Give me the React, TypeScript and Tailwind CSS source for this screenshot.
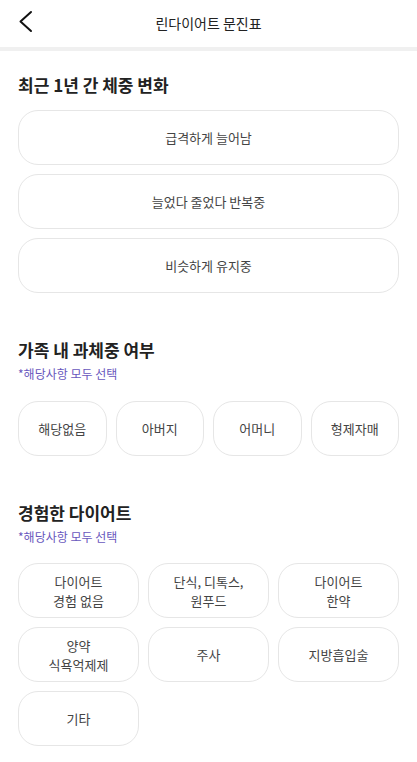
const weightOptions = ['급격하게 늘어남', '늘었다 줄었다 반복중', '비슷하게 유지중'];
const familyOptions = ['해당없음', '아버지', '어머니', '형제자매'];
const dietOptions = [
    ['다이어트', '경험 없음'],
    ['단식, 디톡스,', '원푸드'],
    ['다이어트', '한약'],
    ['양약', '식욕억제제'],
    ['주사'],
    ['지방흡입술'],
    ['기타'],
];

function OptionButton({ lines }: { lines: string[] }) {
    return (
        <button
            type="button"
            className="flex h-[55px] flex-col items-center justify-center rounded-[20px] border border-[#e6e6e6] bg-white text-[13px] leading-[19px] text-[#444]"
        >
            {lines.map((line) => (
                <span key={line}>{line}</span>
            ))}
        </button>
    );
}

function SectionTitle({ title, hint }: { title: string; hint?: boolean }) {
    return (
        <div>
            <h2 className="text-[17px] font-bold leading-[24px] text-[#222]">{title}</h2>
            {hint && (
                <p className="mt-[4px] text-[12px] leading-[16px] text-[#6857bd]">*해당사항 모두 선택</p>
            )}
        </div>
    );
}

export default function App() {
    return (
        <div
            className="min-h-screen bg-white"
            style={{ fontFamily: '"Noto Sans CJK KR", "Noto Sans", sans-serif' }}
        >
            <header className="relative flex h-[47px] items-center justify-center">
                <button type="button" className="absolute left-[18px] top-[10px]">
                    <svg width="16" height="23" viewBox="0 0 16 23" fill="none">
                        <polyline
                            points="13,2 2.5,11.5 13,21"
                            stroke="#111"
                            strokeWidth="2"
                            strokeLinecap="round"
                            strokeLinejoin="round"
                        />
                    </svg>
                </button>
                <h1 className="text-[14px] text-[#222]">린다이어트 문진표</h1>
            </header>
            <div className="h-[4px] bg-[#f0f0f0]" />

            <main className="px-[18px] pb-6 pt-[22px]">
                <section>
                    <SectionTitle title="최근 1년 간 체중 변화" />
                    <div className="mt-[13px] flex flex-col gap-[9px]">
                        {weightOptions.map((option) => (
                            <OptionButton key={option} lines={[option]} />
                        ))}
                    </div>
                </section>

                <section className="mt-[45px]">
                    <SectionTitle title="가족 내 과체중 여부" hint />
                    <div className="mt-[19px] grid grid-cols-4 gap-[9px]">
                        {familyOptions.map((option) => (
                            <OptionButton key={option} lines={[option]} />
                        ))}
                    </div>
                </section>

                <section className="mt-[45px]">
                    <SectionTitle title="경험한 다이어트" hint />
                    <div className="mt-[18px] grid grid-cols-3 gap-[9px]">
                        {dietOptions.map((lines) => (
                            <OptionButton key={lines.join('')} lines={lines} />
                        ))}
                    </div>
                </section>
            </main>
        </div>
    );
}
